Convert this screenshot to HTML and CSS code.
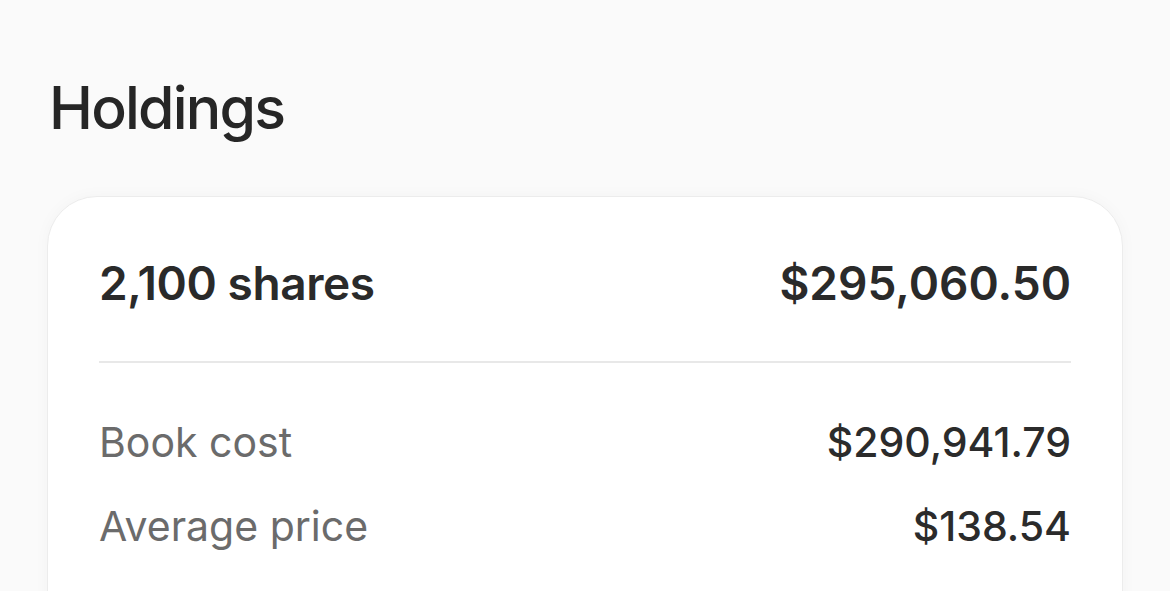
FILE: index.html
```html
<!DOCTYPE html>
<html>
<head>
<meta charset="utf-8">
<link rel="stylesheet" href="styles.css">
</head>
<body>
<main class="page">
  <h1 class="title">Holdings</h1>
  <section class="card">
    <div class="summary">
      <span class="shares">2,100 shares</span>
      <span class="total">$295,060.50</span>
    </div>
    <div class="divider"></div>
    <div class="row">
      <span class="label">Book cost</span>
      <span class="value">$290,941.79</span>
    </div>
    <div class="row">
      <span class="label">Average price</span>
      <span class="value">$138.54</span>
    </div>
  </section>
</main>
</body>
</html>
```

FILE: styles.css
```css
html, body {
  margin: 0;
  padding: 0;
  background: #fafafa;
}
body {
  font-family: Inter, "Noto Sans", sans-serif;
  color: #2b2b2b;
}
.page {
  padding: 72px 47px 0 47px;
}
.title {
  margin: 0;
  padding-left: 2px;
  font-size: 59px;
  font-weight: 500;
  line-height: 72px;
  letter-spacing: -1.8px;
  color: #262626;
}
.card {
  margin-top: 52px;
  background: #fff;
  border: 1.5px solid #ececec;
  border-radius: 50px;
  padding: 48px 51px 40px 51px;
  box-shadow: 0 0 16px rgba(0,0,0,0.03);
  height: 500px;
}
.summary {
  display: flex;
  justify-content: space-between;
  align-items: baseline;
  font-size: 46px;
  font-weight: 600;
  line-height: 76px;
  color: #2a2a2a;
}
.shares {
  letter-spacing: -0.4px;
}
.divider {
  height: 2px;
  background: #e8e8e8;
  margin-top: 40px;
  margin-bottom: 37px;
}
.row {
  display: flex;
  justify-content: space-between;
  align-items: baseline;
  font-size: 41px;
  line-height: 84px;
}
.label {
  color: #6b6b6b;
  font-weight: 400;
}
.value {
  color: #2b2b2b;
  font-weight: 500;
}
```
